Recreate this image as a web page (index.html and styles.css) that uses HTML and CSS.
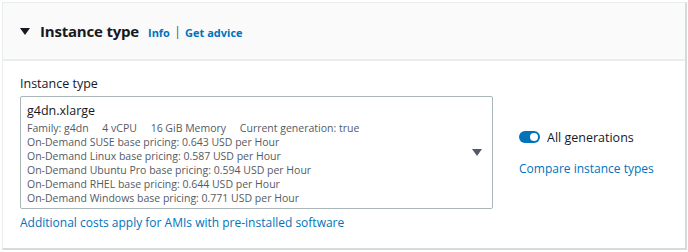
FILE: index.html
```html
<!DOCTYPE html>
<html lang="en">
<head>
    <meta charset="UTF-8">
    <meta name="viewport" content="width=device-width, initial-scale=1.0">
    <title>Instance type</title>
    <link rel="stylesheet" href="styles.css">
</head>
<body>
    <div class="panel">
        <div class="panel-header">
            <span class="caret-down"></span>
            <h2>Instance type</h2>
            <a class="head-link" href="#">Info</a>
            <span class="divider">|</span>
            <a class="head-link" href="#">Get advice</a>
        </div>
        <div class="panel-body">
            <div class="field-label">Instance type</div>
            <div class="row">
                <div class="select">
                    <div class="select-text">
                        <div class="select-title">g4dn.xlarge</div>
                        <div class="select-tags">
                            <span>Family: g4dn</span>
                            <span>4 vCPU</span>
                            <span>16 GiB Memory</span>
                            <span>Current generation: true</span>
                        </div>
                        <div class="select-line">On-Demand SUSE base pricing: 0.643 USD per Hour</div>
                        <div class="select-line">On-Demand Linux base pricing: 0.587 USD per Hour</div>
                        <div class="select-line">On-Demand Ubuntu Pro base pricing: 0.594 USD per Hour</div>
                        <div class="select-line">On-Demand RHEL base pricing: 0.644 USD per Hour</div>
                        <div class="select-line">On-Demand Windows base pricing: 0.771 USD per Hour</div>
                    </div>
                    <span class="select-caret"></span>
                </div>
                <div class="side">
                    <label class="toggle-row">
                        <span class="toggle"><span class="knob"></span></span>
                        All generations
                    </label>
                    <a class="link" href="#">Compare instance types</a>
                </div>
            </div>
            <a class="link extra" href="#">Additional costs apply for AMIs with pre-installed software</a>
        </div>
    </div>
</body>
</html>
```

FILE: styles.css
```css
body {
    font-family: "Open Sans", Arial, sans-serif;
    background-color: #ffffff;
    margin: 0;
    padding: 2px 1px 0 2px;
    color: #16191f;
}
a {
    text-decoration: none;
}
.panel {
    border: 1px solid #eaeded;
    border-right: 2px solid #d5dbdb;
    border-bottom: 2px solid #d5dbdb;
    height: 248px;
    box-sizing: border-box;
}
.panel-header {
    background-color: #fafafa;
    border-bottom: 2px solid #eaeded;
    height: 58px;
    box-sizing: border-box;
    display: flex;
    align-items: center;
    padding-left: 17px;
}
.caret-down {
    width: 0;
    height: 0;
    border-left: 5px solid transparent;
    border-right: 5px solid transparent;
    border-top: 7px solid #16191f;
    margin-right: 10px;
    margin-top: 1px;
}
h2 {
    margin: 0 9px 0 0;
    font-size: 15px;
    font-weight: 700;
    letter-spacing: -0.2px;
}
.head-link {
    color: #0073bb;
    font-size: 11px;
    font-weight: 700;
    margin-top: 2px;
}
.divider {
    color: #545b64;
    font-size: 13px;
    margin: 0 4px;
}
.panel-body {
    padding: 14px 0 0 17px;
}
.field-label {
    font-size: 12.5px;
    margin-bottom: 4px;
}
.row {
    display: flex;
    align-items: center;
}
.select {
    width: 473px;
    height: 113px;
    box-sizing: border-box;
    border: 1px solid #aab7b8;
    border-radius: 2px;
    padding: 5px 6px;
    display: flex;
    align-items: center;
}
.select-text {
    flex: 1;
    align-self: flex-start;
}
.select-title {
    font-size: 12.5px;
    line-height: 18px;
    margin-bottom: 1px;
}
.select-tags, .select-line {
    font-size: 10.5px;
    line-height: 14px;
    color: #545b64;
}
.select-tags span {
    margin-right: 11px;
}
.select-caret {
    width: 0;
    height: 0;
    border-left: 5px solid transparent;
    border-right: 5px solid transparent;
    border-top: 7px solid #545b64;
    margin-right: 4px;
}
.side {
    margin-left: 26px;
    display: flex;
    flex-direction: column;
    gap: 14px;
}
.toggle-row {
    display: flex;
    align-items: center;
    font-size: 12.5px;
}
.toggle {
    width: 21px;
    height: 12px;
    border-radius: 6px;
    background-color: #0073bb;
    position: relative;
    margin-right: 7px;
}
.knob {
    position: absolute;
    right: 2px;
    top: 2px;
    width: 8px;
    height: 8px;
    border-radius: 50%;
    background-color: #ffffff;
}
.link {
    color: #0073bb;
    font-size: 12px;
}
.extra {
    display: inline-block;
    margin-top: 5px;
}
```
